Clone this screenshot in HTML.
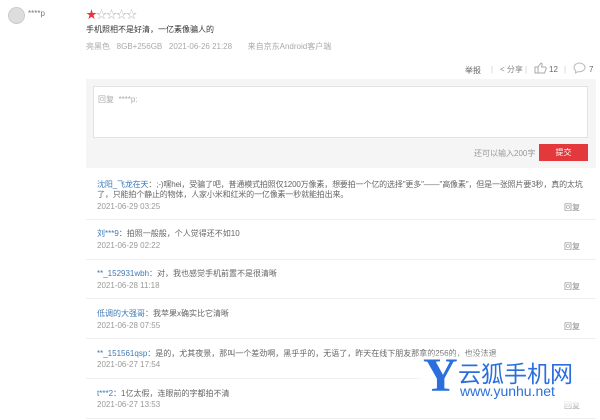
<!DOCTYPE html>
<html><head><meta charset="utf-8"><style>
*{margin:0;padding:0;box-sizing:border-box}
body{width:600px;height:420px;background:#fff;font-family:"Liberation Sans","Noto Sans CJK SC",sans-serif;font-size:8px;color:#666;position:relative;overflow:hidden}
.a{position:absolute;white-space:nowrap}
.n{color:#3d7ab8}
.d{color:#999}
.r{color:#888;left:564px}
.line{position:absolute;left:86px;width:510px;height:1px;background:#eee}
</style></head><body>
<div class="a" style="left:8px;top:7px;width:17px;height:17px;border-radius:50%;background:#ddd;border:1px solid #ccc"></div>
<div class="a" style="left:28px;top:9px;color:#777">****p</div>
<div class="a" style="left:86px;top:6px;font-size:11px;color:#bbb;letter-spacing:-1px"><span style="color:#e4393c">★</span>☆☆☆☆</div>
<div class="a" style="left:86px;top:24px;color:#333">手机照相不是好清，一亿素像骗人的</div>
<div class="a d" style="left:86px;top:41px;color:#aaa">亮黑色&nbsp;&nbsp;&nbsp;8GB+256GB&nbsp;&nbsp;&nbsp;2021-06-26 21:28&nbsp;&nbsp;&nbsp;&nbsp;&nbsp;&nbsp;&nbsp;来自京东Android客户端</div>
<div class="a" style="left:465px;top:65px;color:#666">举报</div>
<div class="a" style="left:491px;top:65px;color:#ccc">|</div>
<div class="a" style="left:500px;top:64px;color:#888">&lt; 分享</div>
<div class="a" style="left:525px;top:65px;color:#ccc">|</div>
<svg class="a" style="left:534px;top:62px" width="13" height="12" viewBox="0 0 13 12"><path d="M1 5h3v6H1z M4 5l3-4c1 0 1.5 1 1 2l-.5 2H11c1 0 1.5 1 1 2l-1.5 4H4" fill="none" stroke="#aaa" stroke-width="1"/></svg>
<div class="a" style="left:549px;top:65px;color:#666">12</div>
<div class="a" style="left:564px;top:65px;color:#ccc">|</div>
<svg class="a" style="left:573px;top:62px" width="13" height="12" viewBox="0 0 13 12"><path d="M6.5 1C3.5 1 1 3 1 5.5c0 1.3.7 2.4 1.8 3.2L2.5 11l2.6-1.4c.4.1.9.1 1.4.1 3 0 5.5-2 5.5-4.2S9.5 1 6.5 1z" fill="none" stroke="#bbb" stroke-width="1"/></svg>
<div class="a" style="left:589px;top:65px;color:#666">7</div>
<div class="a" style="left:86px;top:79px;width:510px;height:89px;background:#f5f5f5"></div>
<div class="a" style="left:93px;top:86px;width:495px;height:52px;background:#fff;border:1px solid #e3e3e3"></div>
<div class="a" style="left:98px;top:94px;color:#aaa">回复&nbsp;&nbsp;****p:</div>
<div class="a" style="left:474px;top:148px;color:#999">还可以输入200字</div>
<div class="a" style="left:539px;top:144px;width:49px;height:17px;background:#e4393c;color:#fff;text-align:center;line-height:17px">提交</div>

<div class="a" style="left:97px;top:180px;line-height:10px;color:#666;white-space:normal;width:496px;letter-spacing:-0.15px">
<span class="n">沈阳_飞龙在天</span>：;-)嘿hei，受骗了吧，普通模式拍照仅1200万像素，想要拍一个亿的选择"更多"——"高像素"，但是一张照片要3秒，真的太坑了，只能拍个静止的物体，人家小米和红米的一亿像素一秒就能拍出来。</div>
<div class="a d" style="left:97px;top:202px">2021-06-29 03:25</div><div class="a r" style="top:202px">回复</div>
<div class="line" style="top:219px"></div>

<div class="a" style="left:97px;top:228px"><span class="n">刘***9</span>：拍照一般般，个人觉得还不如10</div>
<div class="a d" style="left:97px;top:241px">2021-06-29 02:22</div><div class="a r" style="top:241px">回复</div>
<div class="line" style="top:259px"></div>

<div class="a" style="left:97px;top:268px"><span class="n">**_152931wbh</span>：对，我也感觉手机前置不是很清晰</div>
<div class="a d" style="left:97px;top:281px">2021-06-28 11:18</div><div class="a r" style="top:281px">回复</div>
<div class="line" style="top:298px"></div>

<div class="a" style="left:97px;top:308px"><span class="n">低调的大强哥</span>：我苹果x确实比它清晰</div>
<div class="a d" style="left:97px;top:321px">2021-06-28 07:55</div><div class="a r" style="top:321px">回复</div>
<div class="line" style="top:338px"></div>

<div class="a" style="left:97px;top:348px"><span class="n">**_151561qsp</span>：是的，尤其夜景，那叫一个差劲啊，黑乎乎的，无语了，昨天在线下朋友那拿的256的，也没法退</div>
<div class="a d" style="left:97px;top:360px">2021-06-27 17:54</div>
<div class="line" style="top:378px"></div>

<div class="a" style="left:97px;top:388px"><span class="n">t***2</span>：1亿太假，连眼前的字都拍不清</div>
<div class="a d" style="left:97px;top:400px">2021-06-27 13:53</div><div class="a r" style="top:400px">回复</div>
<div class="line" style="top:418px"></div>

<div class="a" style="left:418px;top:356px;width:180px;height:50px;background:rgba(255,255,255,0.85);filter:blur(3px)"></div>
<div class="a" style="left:423px;top:352px;font-family:'Liberation Serif',serif;font-weight:bold;font-size:48px;line-height:48px;color:#2a6fdc">Y</div>
<div class="a" style="left:458px;top:359px;font-size:23px;line-height:26px;color:#2a6fdc;font-family:'Noto Sans CJK SC',sans-serif">云狐手机网</div>
<div class="a" style="left:460px;top:383px;font-size:14px;line-height:16px;color:#2a6fdc">www.yunhu.net</div>
</body></html>
